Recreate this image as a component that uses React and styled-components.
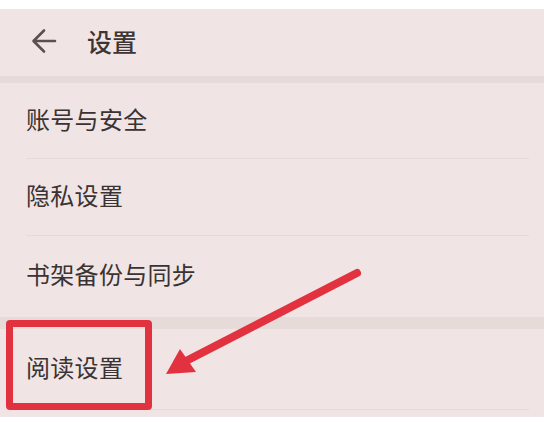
import React from "react"
import styled, { createGlobalStyle } from "styled-components"

const GlobalStyle = createGlobalStyle`
  html, body {
    margin: 0;
    padding: 0;
    background: #ffffff;
  }
  body {
    font-family: "Noto Sans CJK SC", "Noto Sans", sans-serif;
  }
`

const Page = styled.div`
  position: relative;
  width: 544px;
  height: 423px;
  overflow: hidden;
  padding-top: 9px;
  box-sizing: border-box;
`

const Screen = styled.div`
  background: #f0e5e4;
  padding-bottom: 7px;
`

const Header = styled.div`
  display: flex;
  align-items: center;
  height: 67px;
  box-sizing: border-box;
  padding: 0 0 4px 31px;
  gap: 30px;
  color: #3d3535;
  font-size: 25px;
  font-weight: 500;
`

const Band = styled.div`
  height: ${props => props.size}px;
  background: #e6dbd9;
`

const Row = styled.div`
  display: flex;
  align-items: center;
  height: ${props => props.h}px;
  box-sizing: border-box;
  padding-bottom: 5px;
  margin-left: 26px;
  margin-right: 15px;
  border-bottom: 1px solid ${props => (props.last ? "transparent" : "#e6dad8")};
  color: #3a3333;
  font-size: 24px;
  letter-spacing: 0.3px;
`

const Overlay = styled.svg`
  position: absolute;
  left: 0;
  top: 0;
  pointer-events: none;
`

const Highlight = styled.div`
  position: absolute;
  left: 6px;
  top: 320px;
  width: 146px;
  height: 90px;
  box-sizing: border-box;
  border: 7px solid #e2323f;
  border-radius: 4px;
`

const BackArrow = () => (
  <svg width="26" height="26" viewBox="0 0 26 26">
    <path
      d="M24 13H3M13 2.5L2.5 13L13 23.5"
      fill="none"
      stroke="#5b5050"
      strokeWidth="2.6"
      strokeLinecap="round"
      strokeLinejoin="round"
    />
  </svg>
)

const items = [
  { label: "账号与安全", h: 76 },
  { label: "隐私设置", h: 77 },
  { label: "书架备份与同步", h: 81, last: true },
]

export default function App() {
  return (
    <>
      <GlobalStyle />
      <Page>
        <Screen>
          <Header>
            <BackArrow />
            <span>设置</span>
          </Header>
          <Band size={7} />
          {items.map(item => (
            <Row key={item.label} h={item.h} last={item.last}>
              {item.label}
            </Row>
          ))}
          <Band size={12} />
          <Row h={81}>阅读设置</Row>
        </Screen>
        <Highlight />
        <Overlay width="544" height="423" viewBox="0 0 544 423">
          <line
            x1="357"
            y1="273"
            x2="186"
            y2="361"
            stroke="#e2323f"
            strokeWidth="8"
            strokeLinecap="round"
          />
          <polygon points="166,374 180,349 196,372" fill="#e2323f" />
        </Overlay>
      </Page>
    </>
  )
}
